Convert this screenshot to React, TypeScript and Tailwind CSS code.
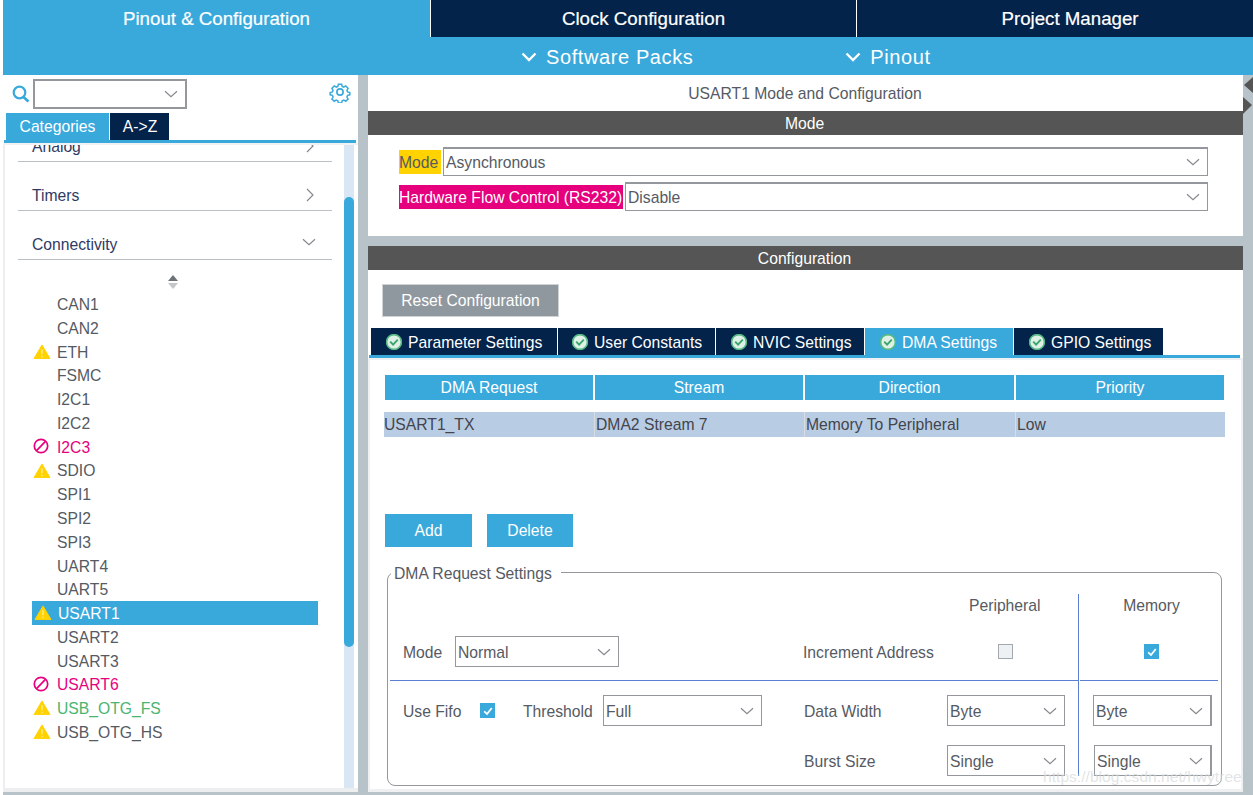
const PERIPHERALS: { name: string; status?: "warn" | "block"; tone?: string; active?: boolean }[] = [
  { name: "CAN1" },
  { name: "CAN2" },
  { name: "ETH", status: "warn" },
  { name: "FSMC" },
  { name: "I2C1" },
  { name: "I2C2" },
  { name: "I2C3", status: "block", tone: "text-[#e6007e]" },
  { name: "SDIO", status: "warn" },
  { name: "SPI1" },
  { name: "SPI2" },
  { name: "SPI3" },
  { name: "UART4" },
  { name: "UART5" },
  { name: "USART1", status: "warn", active: true },
  { name: "USART2" },
  { name: "USART3" },
  { name: "USART6", status: "block", tone: "text-[#e6007e]" },
  { name: "USB_OTG_FS", status: "warn", tone: "text-[#49b56f]" },
  { name: "USB_OTG_HS", status: "warn" },
]

const CONFIG_TABS = [
  { label: "Parameter Settings", width: "w-[186px]", pad: "pl-[15px]" },
  { label: "User Constants", width: "w-[157px]", pad: "pl-[14px]" },
  { label: "NVIC Settings", width: "w-[148px]", pad: "pl-[15px]" },
  { label: "DMA Settings", width: "w-[148px]", pad: "pl-[15px]", active: true },
  { label: "GPIO Settings", width: "w-[149px]", pad: "pl-[15px]" },
]

function Caret({ className = "" }: { className?: string }) {
  return (
    <svg viewBox="0 0 14 8" className={`h-[8px] w-[14px] shrink-0 ${className}`} fill="none" stroke="#85898d" strokeWidth="1.2">
      <path d="M1 1.2 L7 6.6 L13 1.2" />
    </svg>
  )
}

function Select({ value, className, thick }: { value?: string; className: string; thick?: boolean }) {
  return (
    <div
      className={`flex shrink-0 items-center justify-between border border-[#94989c] bg-white pl-[2px] pr-[7px] ${
        thick ? "border-t-2" : ""
      } ${className}`}
    >
      <span className="pt-[2px]">{value}</span>
      <Caret />
    </div>
  )
}

function Warn() {
  return (
    <svg viewBox="0 0 18 16" className="h-[15px] w-[18px]">
      <path d="M9 1 L17.5 15.5 H0.5 Z" fill="#ffd200" stroke="#ffd200" strokeLinejoin="round" />
      <path d="M9 5.5 V11" stroke="#fff3b0" strokeWidth="1.2" />
      <path d="M9 12.4 V14" stroke="#fff3b0" strokeWidth="1.2" />
    </svg>
  )
}

function Blocked() {
  return (
    <svg viewBox="0 0 16 16" className="h-[16px] w-[16px]" fill="none" stroke="#e6007e" strokeWidth="1.7">
      <circle cx="8" cy="8" r="6.7" />
      <path d="M3.6 12.6 L12.4 3.4" />
    </svg>
  )
}

function TabCheck() {
  return (
    <svg viewBox="0 0 16 16" className="h-[16px] w-[16px] shrink-0">
      <circle cx="8" cy="8" r="7.5" fill="#dff1e6" />
      <circle cx="8" cy="8" r="7.4" fill="none" stroke="#55b985" strokeWidth="1.6" />
      <path d="M4.2 7.6 L7.1 10.6 L11.8 5.6" fill="none" stroke="#3aa66d" strokeWidth="1.9" />
    </svg>
  )
}

function CheckBox({ checked }: { checked?: boolean }) {
  if (!checked) {
    return <div className="h-[15px] w-[15px] border border-[#a4a8ac] bg-[#eef1f4]" />
  }
  return (
    <div className="flex h-[15px] w-[15px] items-center justify-center bg-[#39a9dc]">
      <svg viewBox="0 0 12 12" className="h-[12px] w-[12px]" fill="none" stroke="#fff" strokeWidth="1.8">
        <path d="M2.2 6.4 L5 9 L9.8 3" />
      </svg>
    </div>
  )
}

function CategoryRow({ label, open, className = "" }: { label: string; open?: boolean; className?: string }) {
  return (
    <div className={`ml-[13px] flex h-[49px] w-[314px] items-end justify-between border-b border-[#b9c1c6] pb-[4px] pl-[14px] pr-[18px] text-[#2f3a63] ${className}`}>
      <span className="leading-[20px]">{label}</span>
      {open ? (
        <Caret className="mb-[9px] -mr-[2px]" />
      ) : (
        <svg viewBox="0 0 8 14" className="mb-[4px] h-[14px] w-[8px]" fill="none" stroke="#85898d" strokeWidth="1.2">
          <path d="M1 1 L7 7 L1 13" />
        </svg>
      )}
    </div>
  )
}

function LeftPanel() {
  return (
    <div className="flex w-[355px] shrink-0 flex-col bg-white">
      {/* search row */}
      <div className="flex h-[38px] items-center pl-[9px] pr-[9px]">
        <svg viewBox="0 0 18 18" className="h-[18px] w-[18px]" fill="none" stroke="#39a9dc">
          <circle cx="7.5" cy="7.5" r="5.8" strokeWidth="2.2" />
          <path d="M11.5 12 L16.5 16.5" strokeWidth="2.8" />
        </svg>
        <div className="ml-[3px] flex h-[30px] w-[154px] items-center justify-end border-2 border-[#94989c] pr-[7px]">
          <Caret />
        </div>
        <svg viewBox="0 0 24 24" className="ml-auto mr-[-2px] mt-[-4px] h-[22px] w-[22px]" fill="none" stroke="#39a9dc" strokeWidth="1.8">
          <circle cx="12" cy="12" r="3.4" />
          <path d="M10 2.5h4l.6 2.7 2 .9 2.4-1.4 2.8 2.8-1.4 2.4.8 2 2.7.7v2.8l-2.7.7-.8 2 1.4 2.4-2.8 2.8-2.4-1.4-2 .8-.6 2.7h-4l-.6-2.7-2-.8-2.4 1.4-2.8-2.8 1.4-2.4-.8-2-2.7-.7v-2.8l2.7-.7.8-2L2.2 7.5 5 4.7l2.4 1.4 2-.9z" transform="translate(1.2 1.2) scale(.9)" />
        </svg>
      </div>

      {/* view tabs */}
      <div className="flex h-[27px] pl-[3px] text-white">
        <div className="flex w-[103px] items-center justify-center bg-[#39a9dc] pt-px">Categories</div>
        <div className="ml-px flex w-[59px] items-center justify-center bg-[#03234b] pl-px pt-px">A-&gt;Z</div>
      </div>
      <div className="ml-px h-[3px] w-[352px] bg-[#39a9dc]" />
      <div className="h-[2px] bg-[#f0f2f4]" />

      {/* tree list and scrollbar */}
      <div className="flex min-h-0 flex-1 border-l-2 border-[#eceef0] pr-[4px]">
        <div className="min-w-0 flex-1 overflow-hidden">
          <CategoryRow label="Analog" className="-mt-[32px]" />
          <CategoryRow label="Timers" />
          <CategoryRow label="Connectivity" open />
          <div className="h-[32px] pl-[163px] pt-[15px]">
            <svg viewBox="0 0 10 14" className="h-[14px] w-[10px]">
              <path d="M5 0 L10 6 H0 Z" fill="#6e7276" />
              <path d="M5 14 L10 8 H0 Z" fill="#c4c7ca" />
            </svg>
          </div>
          {PERIPHERALS.map((item) => (
            <div
              key={item.name}
              className={`ml-[27px] flex h-[23.78px] w-[286px] items-center ${
                item.active ? "bg-[#39a9dc] text-white" : item.tone ?? "text-[#555a63]"
              }`}
            >
              <span className={`flex w-[25px] shrink-0 items-center ${item.active ? "justify-end pr-[5px]" : "pl-px"}`}>
                {item.status === "warn" ? <Warn /> : null}
                {item.status === "block" ? <Blocked /> : null}
              </span>
              <span className={`pt-[2px] ${item.active ? "ml-px" : ""}`}>{item.name}</span>
            </div>
          ))}
        </div>
        <div className="w-[10px] shrink-0 bg-[#d9e7f4] pt-[52px]">
          <div className="h-[450px] rounded-[5px] bg-[#39a9dc]" />
        </div>
      </div>
      <div className="h-[4px] bg-[#eceef0]" />
    </div>
  )
}

function Field({ label, className = "" }: { label: string; className?: string }) {
  return <span className={`shrink-0 pt-[2px] text-[#555a63] ${className}`}>{label}</span>
}

function DmaRequestSettings() {
  return (
    <div className="relative ml-[17px] mt-[25px] h-[214px] w-[835px] rounded-[8px] border border-[#94989c] pl-[2px] pt-[21px] text-[#555a63]">
      <span className="absolute -top-[9px] left-[3px] bg-white pl-[3px] pr-[9px] leading-[20px]">DMA Request Settings</span>
      <div className="flex">
        {/* left part, up to the vertical rule */}
        <div className="w-[689px] shrink-0 border-r border-[#5b7fd0]">
          <div className="flex h-[22px] items-center pt-[2px]">
            <span className="ml-[579px]">Peripheral</span>
          </div>
          <div className="flex h-[65px] items-end border-b border-[#5b7fd0] pb-[13px] pl-[13px]">
            <div className="flex h-[31px] items-center">
              <Field label="Mode" className="w-[52px]" />
              <Select value="Normal" className="h-[31px] w-[164px]" />
              <Field label="Increment Address" className="ml-[184px] w-[195px]" />
              <CheckBox />
            </div>
          </div>
          <div className="h-[45px] pl-[13px] pt-[14px]">
            <div className="flex h-[31px] items-center">
              <Field label="Use Fifo" className="w-[77px]" />
              <CheckBox checked />
              <Field label="Threshold" className="ml-[28px] w-[80px]" />
              <Select value="Full" className="h-[31px] w-[159px]" />
              <Field label="Data Width" className="ml-[42px] w-[143px]" />
              <Select value="Byte" className="h-[31px] w-[118px]" />
            </div>
          </div>
          <div className="h-[50px] pl-[414px] pt-[19px]">
            <div className="flex h-[31px] items-center">
              <Field label="Burst Size" className="w-[143px]" />
              <Select value="Single" className="h-[31px] w-[118px]" />
            </div>
          </div>
        </div>

        {/* memory column */}
        <div className="w-[142px] shrink-0">
          <div className="flex h-[22px] items-center justify-center pl-[3px] pt-[2px]">Memory</div>
          <div className="ml-px flex h-[65px] w-[138px] items-end border-b border-[#5b7fd0] pb-[21px] pl-[64px]">
            <CheckBox checked />
          </div>
          <div className="h-[45px] pl-[14px] pt-[14px]">
            <Select value="Byte" className="h-[31px] w-[119px] border-r-2" />
          </div>
          <div className="h-[50px] pl-[15px] pt-[19px]">
            <Select value="Single" className="h-[31px] w-[118px] border-r-2" />
          </div>
        </div>
      </div>
    </div>
  )
}

function RightPanel() {
  return (
    <div className="flex w-[875px] shrink-0 flex-col">
      {/* mode section */}
      <div className="h-[161px] shrink-0 bg-white">
        <div className="flex h-[36px] items-center justify-center pr-px pt-px text-[#555a63]">USART1 Mode and Configuration</div>
        <div className="flex h-[24px] items-center justify-center bg-[#545554] pr-[2px] pt-px text-white">Mode</div>
        <div className="flex h-[41px] items-end gap-[2px] pl-[31px] text-[#555a63]">
          <div className="mb-[2px] flex h-[24px] w-[42px] items-center bg-[#ffd200] pt-[2px]">Mode</div>
          <Select value="Asynchronous" thick className="h-[29px] w-[765px]" />
        </div>
        <div className="mt-[6px] flex items-center gap-[2px] pl-[31px] text-[#555a63]">
          <div className="flex h-[24px] w-[224px] items-center whitespace-nowrap bg-[#e6007e] pt-[2px] text-white">Hardware Flow Control (RS232)</div>
          <Select value="Disable" thick className="h-[29px] w-[583px]" />
        </div>
      </div>

      {/* configuration section */}
      <div className="mt-[10px] flex min-h-0 flex-1 flex-col bg-white">
        <div className="flex h-[24px] shrink-0 items-center justify-center bg-[#545554] pr-[2px] pt-px text-white">Configuration</div>
        <div className="ml-[14px] mt-[14px] flex h-[33px] w-[177px] items-center justify-center border border-[#d0d3d6] bg-[#90989f] text-white">
          Reset Configuration
        </div>
        <div className="ml-[3px] mt-[11px] flex h-[27px] gap-px">
          {CONFIG_TABS.map((tab) => (
            <div
              key={tab.label}
              className={`flex items-center gap-[6px] text-white ${tab.width} ${tab.pad} ${tab.active ? "bg-[#39a9dc]" : "bg-[#03234b]"}`}
            >
              <TabCheck />
              <span className="pt-[2px]">{tab.label}</span>
            </div>
          ))}
        </div>
        <div className="ml-px h-[3px] w-[871px] bg-[#39a9dc]" />

        <div className="flex min-h-0 flex-1 flex-col border-l-2 border-t-2 border-r-2 border-[#eef0f2]">
          {/* dma table */}
          <div className="ml-[15px] mt-[15px] grid h-[24px] w-[839px] grid-cols-[208px_208px_209px_208px] gap-x-[2px] text-white">
            {["DMA Request", "Stream", "Direction", "Priority"].map((head) => (
              <div key={head} className="flex items-center justify-center bg-[#39a9dc] pt-px">
                {head}
              </div>
            ))}
          </div>
          <div className="ml-[14px] mt-[13px] grid h-[25px] w-[841px] grid-cols-[210px_210px_211px_210px] border-b border-[#d9dde1] text-[#44444c]">
            {["USART1_TX", "DMA2 Stream 7", "Memory To Peripheral", "Low"].map((cell, i) => (
              <div key={cell} className={`flex items-center bg-[#b8cde4] pt-px ${i > 0 ? "border-l border-[#d9dde1] pl-px" : ""}`}>
                {cell}
              </div>
            ))}
          </div>

          <div className="ml-[15px] mt-[77px] flex gap-[15px] text-white">
            <div className="flex h-[33px] w-[87px] items-center justify-center bg-[#39a9dc]">Add</div>
            <div className="flex h-[33px] w-[86px] items-center justify-center bg-[#39a9dc]">Delete</div>
          </div>

          <DmaRequestSettings />
        </div>
      </div>
      <div className="h-[3px] shrink-0 bg-[#eef0f2]" />
    </div>
  )
}

export default function App() {
  return (
    <div className="relative flex h-[795px] w-[1253px] flex-col overflow-hidden bg-white pl-[3px] font-['Liberation_Sans',Arial,sans-serif] text-[15.7px]">
      {/* top navigation */}
      <div className="flex h-[37px] shrink-0 text-[18.7px] text-white [-webkit-text-stroke:0.2px_white]">
        <div className="flex w-[427px] items-center justify-center bg-[#39a9dc] pt-px">Pinout &amp; Configuration</div>
        <div className="ml-px flex w-[425px] items-center justify-center bg-[#03234b] pt-px">Clock Configuration</div>
        <div className="ml-px flex flex-1 items-center justify-center bg-[#03234b] pl-[30px] pt-px">Project Manager</div>
      </div>
      <div className="flex h-[38px] shrink-0 items-center bg-[#39a9dc] pl-[518px] pt-px text-[20px] text-white">
        <svg viewBox="0 0 16 10" className="h-[10px] w-[16px]" fill="none" stroke="#fff" strokeWidth="2.4">
          <path d="M1.5 1.5 L8 8 L14.5 1.5" />
        </svg>
        <span className="ml-[9px] tracking-[0.6px]">Software Packs</span>
        <svg viewBox="0 0 16 10" className="ml-[152px] h-[10px] w-[16px]" fill="none" stroke="#fff" strokeWidth="2.4">
          <path d="M1.5 1.5 L8 8 L14.5 1.5" />
        </svg>
        <span className="ml-[9px] tracking-[0.6px]">Pinout</span>
      </div>

      {/* main area */}
      <div className="flex min-h-0 flex-1 gap-[10px] bg-[#b8c3c9] pb-[3px]">
        <LeftPanel />
        <RightPanel />
      </div>

      {/* panel collapse arrows */}
      <svg viewBox="0 0 10 40" className="absolute left-[1243px] top-[76px] h-[40px] w-[10px]">
        <path d="M1 9 L10 1 V17 Z" fill="#545554" />
        <path d="M0 21 L9 29 L0 38 Z" fill="#545554" />
      </svg>

      {/* image watermark */}
      <span className="absolute left-[1043px] top-[765px] text-[15.5px] tracking-[0.05px] text-[#d5d8da]/70">https://blog.csdn.net/hwytree</span>
    </div>
  )
}
